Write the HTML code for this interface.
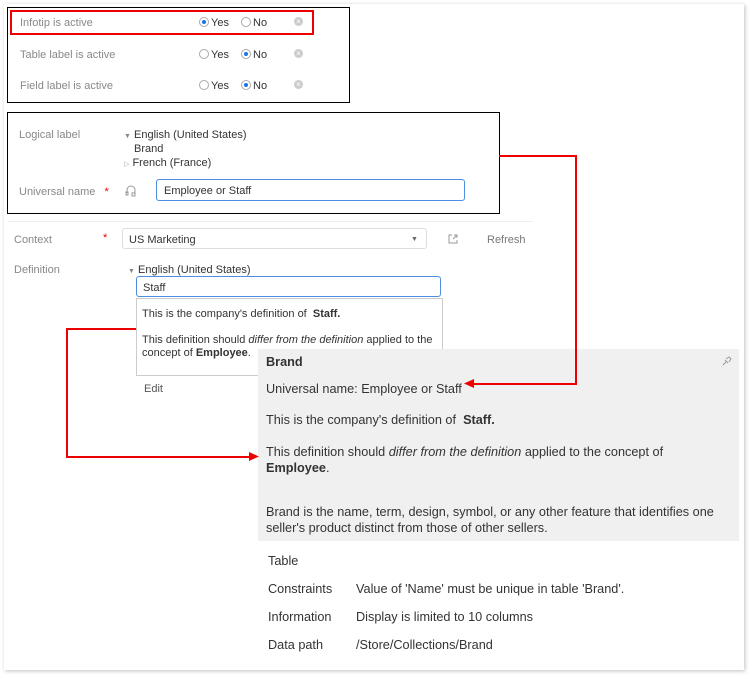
<!DOCTYPE html>
<html><head><style>
body{margin:0;width:753px;height:679px;background:#fff;position:relative;overflow:hidden;font-family:"Liberation Sans",sans-serif;font-size:11px;color:#333}
.a{position:absolute;white-space:nowrap}
div.a:not(.box){margin-top:2px}
.g{color:#888}
.card{position:absolute;left:4px;top:4px;width:740px;height:666px;background:#fff;box-shadow:1px 1px 4px rgba(0,0,0,.25)}
.rad{position:absolute;width:8px;height:8px;border:1px solid #aaa;border-radius:50%;background:#fff}
.rad.on::after{content:"";position:absolute;left:2px;top:2px;width:4px;height:4px;border-radius:50%;background:#1a73e8}
.x{position:absolute;width:9px;height:9px;border-radius:50%;background:#ccc;color:#fff;font-size:8px;line-height:9px;text-align:center}
.red{position:absolute;background:#e00}
.tt{font-size:12.7px;color:#333}
</style></head><body>
<div class="card"></div>
<div class="a box" style="left:7px;top:7px;width:343px;height:96px;border:1px solid #000;box-sizing:border-box"></div>
<div class="a box" style="left:10px;top:10px;width:304px;height:25px;border:2px solid #e00;box-sizing:border-box"></div>
<div class="a g" style="left:20px;top:15px">Infotip is active</div>
<div class="a g" style="left:20px;top:47px">Table label is active</div>
<div class="a g" style="left:20px;top:78px">Field label is active</div>
<div class="rad on" style="left:199px;top:17px"></div><div class="a" style="left:211px;top:15px">Yes</div>
<div class="rad" style="left:241px;top:17px"></div><div class="a" style="left:253px;top:15px">No</div>
<div class="rad" style="left:199px;top:49px"></div><div class="a" style="left:211px;top:47px">Yes</div>
<div class="rad on" style="left:241px;top:49px"></div><div class="a" style="left:253px;top:47px">No</div>
<div class="rad" style="left:199px;top:80px"></div><div class="a" style="left:211px;top:78px">Yes</div>
<div class="rad on" style="left:241px;top:80px"></div><div class="a" style="left:253px;top:78px">No</div>
<div class="x" style="left:294px;top:17px">×</div>
<div class="x" style="left:294px;top:49px">×</div>
<div class="x" style="left:294px;top:80px">×</div>
<div class="a box" style="left:7px;top:112px;width:493px;height:102px;border:1px solid #000;box-sizing:border-box"></div>
<div class="a g" style="left:19px;top:127px">Logical label</div>
<div class="a" style="left:124px;top:127px"><span style="font-size:7px;color:#888">▼</span> English (United States)</div>
<div class="a" style="left:134px;top:141px">Brand</div>
<div class="a" style="left:124px;top:155px"><span style="font-size:7px;color:#aaa">▷</span> French (France)</div>
<div class="a g" style="left:19px;top:184px">Universal name <span style="color:#e00;margin-left:6px">*</span></div>
<svg class="a" style="left:125px;top:185px" width="12" height="12" viewBox="0 0 12 12" fill="none" stroke="#999" stroke-width="1"><path d="M2 8V5a4 4 0 0 1 8 0v3"/><rect x="1" y="7" width="2" height="3"/><rect x="7" y="8" width="3" height="3"/></svg>
<div class="a box" style="left:156px;top:179px;width:309px;height:22px;border:1.5px solid #4a8fe0;border-radius:3px;box-sizing:border-box;padding:5px 7px">Employee or Staff</div>
<div class="a box" style="left:8px;top:221px;width:525px;height:1px;background:#eee"></div>
<div class="a g" style="left:14px;top:232px">Context</div>
<div class="a" style="left:103px;top:230px;color:#e00">*</div>
<div class="a box" style="left:122px;top:228px;width:305px;height:21px;border:1px solid #ddd;border-radius:3px;box-sizing:border-box;padding:5px 6px">US Marketing</div>
<div class="a" style="left:411px;top:234px;font-size:7px;color:#666">▼</div>
<svg class="a" style="left:448px;top:234px" width="10" height="10" viewBox="0 0 10 10" fill="none" stroke="#999"><path d="M4 1H1v8h8V6M5 5l4-4M6 1h3v3"/></svg>
<div class="a g" style="left:487px;top:232px;color:#777">Refresh</div>
<div class="a g" style="left:14px;top:262px">Definition</div>
<div class="a" style="left:128px;top:262px"><span style="font-size:7px;color:#888">▼</span> English (United States)</div>
<div class="a box" style="left:136px;top:276px;width:305px;height:21px;border:1.5px solid #4a8fe0;border-radius:3px;box-sizing:border-box;padding:5px 6px">Staff</div>
<div class="a box" style="left:136px;top:298px;width:307px;height:78px;border:1px solid #ccc;box-sizing:border-box"></div>
<div class="a" style="left:142px;top:306px">This is the company's definition of &nbsp;<b>Staff.</b></div>
<div class="a" style="left:142px;top:332px">This definition should <i>differ from the definition</i> applied to the</div>
<div class="a" style="left:142px;top:345px">concept of <b>Employee</b>.</div>
<div class="a" style="left:144px;top:381px;color:#555">Edit</div>
<div class="a box" style="left:258px;top:349px;width:481px;height:192px;background:#f0f0f0"></div>
<div class="a tt" style="left:266px;top:353px;font-weight:bold">Brand</div>
<svg class="a" style="left:722px;top:356px" width="10" height="10" viewBox="0 0 10 10" fill="none" stroke="#999"><path d="M1 9l3-3M3 4l3 3M4 3l3-2 2 2-2 3"/></svg>
<div class="a tt" style="left:266px;top:380px">Universal name: Employee or Staff</div>
<div class="a tt" style="left:266px;top:411px">This is the company's definition of &nbsp;<b>Staff.</b></div>
<div class="a tt" style="left:266px;top:443px">This definition should <i>differ from the definition</i> applied to the concept of</div>
<div class="a tt" style="left:266px;top:459px"><b>Employee</b>.</div>
<div class="a tt" style="left:266px;top:503px">Brand is the name, term, design, symbol, or any other feature that identifies one</div>
<div class="a tt" style="left:266px;top:519px">seller's product distinct from those of other sellers.</div>
<div class="a tt" style="left:268px;top:552px">Table</div>
<div class="a tt g" style="left:268px;top:580px">Constraints</div>
<div class="a tt" style="left:356px;top:580px">Value of 'Name' must be unique in table 'Brand'.</div>
<div class="a tt g" style="left:268px;top:608px">Information</div>
<div class="a tt" style="left:356px;top:608px">Display is limited to 10 columns</div>
<div class="a tt g" style="left:268px;top:636px">Data path</div>
<div class="a tt" style="left:356px;top:636px">/Store/Collections/Brand</div>
<div class="red" style="left:499px;top:155px;width:78px;height:1.5px"></div>
<div class="red" style="left:575px;top:155px;width:1.5px;height:229px"></div>
<div class="red" style="left:472px;top:383px;width:105px;height:1.5px"></div>
<svg class="a" style="left:464px;top:379px" width="10" height="9"><path d="M0 4.5L10 0V9Z" fill="#e00"/></svg>
<div class="red" style="left:66px;top:328px;width:70px;height:1.5px"></div>
<div class="red" style="left:66px;top:328px;width:1.5px;height:129px"></div>
<div class="red" style="left:66px;top:456px;width:184px;height:1.5px"></div>
<svg class="a" style="left:249px;top:452px" width="10" height="9"><path d="M10 4.5L0 0V9Z" fill="#e00"/></svg>
</body></html>
